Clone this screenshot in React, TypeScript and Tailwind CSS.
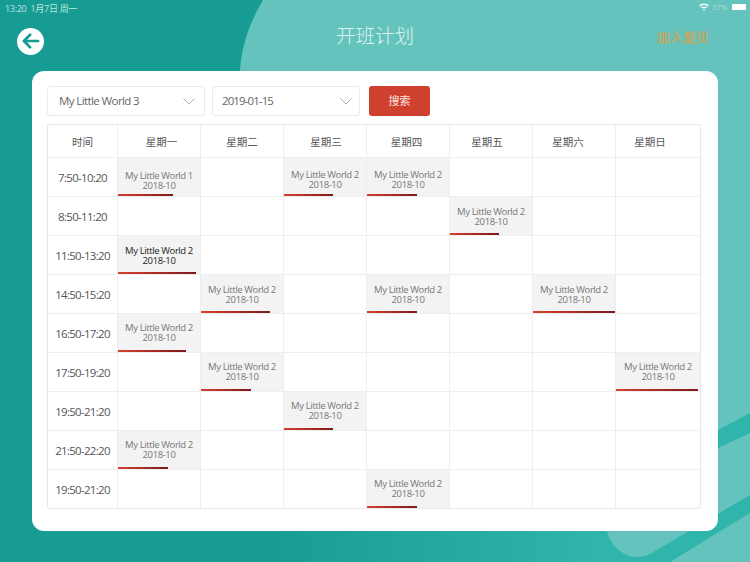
import React from "react";

const slots: [string, Record<number, [number, boolean?]>][] = [
  ["7:50-10:20", { 0: [55], 2: [49], 3: [50] }],
  ["8:50-11:20", { 4: [49] }],
  ["11:50-13:20", { 0: [78, true] }],
  ["14:50-15:20", { 1: [69], 3: [50], 5: [82] }],
  ["16:50-17:20", { 0: [68] }],
  ["17:50-19:20", { 1: [50], 6: [82] }],
  ["19:50-21:20", { 2: [49] }],
  ["21:50-22:20", { 0: [50] }],
  ["19:50-21:20", { 3: [50] }],
];
const days = ["星期一", "星期二", "星期三", "星期四", "星期五", "星期六", "星期日"];
const dayPad = ["pl-[5px]", "", "pl-[2px]", "pr-[3px]", "pr-[8px]", "pr-[12px]", "pr-[16px]"];
const rowPad = ["pt-[12px]", "pt-[10px]", "pt-[10px]", "pt-[10px]", "pt-[9px]", "pt-[9px]", "pt-[9px]", "pt-[9px]", "pt-[9px]"];

const font = { fontFamily: '"Open Sans","Noto Sans CJK SC",sans-serif' };

function Chevron() {
  return (
    <svg width="12" height="7" viewBox="0 0 12 7" fill="none" stroke="#a8aeae" strokeWidth="1">
      <path d="M.5.5L6 6 11.5.5" />
    </svg>
  );
}

export default function App() {
  return (
    <div className="relative w-[750px] h-[562px] overflow-hidden bg-[#169c92]" style={font}>
      <svg className="absolute inset-0" width="750" height="562" viewBox="0 0 750 562">
        <defs>
          <linearGradient id="bg" x1="0" y1="0" x2="1" y2="0">
            <stop offset="0.35" stopColor="#169c92" />
            <stop offset="0.8" stopColor="#2fb5ab" />
          </linearGradient>
        </defs>
        <rect width="750" height="562" fill="url(#bg)" />
        <path d="M263 0C248 25 241 50 240 71L240 300L606 525V562H750V0Z" fill="#65c3bd" />
        <path d="M718 430L750 413V433L718 448Z" fill="#2fb5ab" />
        <path d="M606 525C608 548 630 564 650 554L750 495V513L670 562H606Z" fill="#2fb5ab" />
      </svg>

      <div className="relative flex flex-col h-full">
        <div className="flex justify-between items-center h-[18px] pl-[5px] pr-[4px] text-[9px] tracking-[-0.3px] text-[#bfe6e2]">
          <span>13:20&nbsp;&nbsp;1月7日 周一</span>
          <span className="flex items-center gap-[3px] text-[8px] -mt-[5px]">
            <svg width="10" height="8" viewBox="0 0 10 8" fill="white">
              <path d="M0 2.6C2.8-.2 7.2-.2 10 2.6L9 3.6C6.7 1.4 3.3 1.4 1 3.6ZM2 4.6C3.7 3 6.3 3 8 4.6L7 5.6C5.9 4.6 4.1 4.6 3 5.6ZM5 8L3.9 6.7C4.5 6.2 5.5 6.2 6.1 6.7Z" />
            </svg>
            <span className="text-[#a9dcd8] mr-[2px]">37%</span>
            <span className="block shrink-0 w-[14px] h-[6px] bg-white rounded-[1px]" />
          </span>
        </div>

        <div className="flex items-center justify-between h-[53px] pl-[17px] pr-[41px]">
          <div className="w-[27px] h-[27px] rounded-full bg-white flex items-center justify-center -mt-[7px]">
            <svg width="18" height="16" viewBox="0 0 20 18" fill="none" stroke="#169c92" strokeWidth="3" strokeLinecap="round" strokeLinejoin="round">
              <path d="M9 2L2 9l7 7M2.5 9H18" />
            </svg>
          </div>
          <div className="absolute left-0 right-0 top-[22px] text-center text-[19.5px] leading-[28px] font-light text-[#dff3f1]">开班计划</div>
          <div className="text-[13px] font-bold text-[#c2a765] -mt-[14px]">加入爱贝</div>
        </div>

        <div className="ml-[32px] w-[686px] h-[460px] rounded-[12px] bg-white p-[15px]">
          <div className="flex gap-[7px] h-[30px] text-[11.5px] text-[#666]">
            <div className="w-[158px] flex items-center justify-between pl-[11px] pr-[9px] border border-[#eaeaea] rounded-[3px] tracking-[-0.6px]">
              My Little World 3 <Chevron />
            </div>
            <div className="w-[148px] flex items-center justify-between pl-[9px] pr-[7px] border border-[#eaeaea] rounded-[3px] tracking-[-0.9px]">
              2019-01-15 <Chevron />
            </div>
            <div className="w-[61px] ml-[2px] flex items-center justify-center rounded-[3px] bg-[#d0402e] text-[11px] text-[#f8e4e0]">搜索</div>
          </div>

          <div className="mt-[8px] w-[654px] border border-[#e9e9e9] rounded-[2px] grid grid-cols-[69px_repeat(6,83px)_1fr] grid-rows-[33px_repeat(8,39px)_38px] text-[#555]">
            <div className="flex items-center justify-center text-[10.5px] pt-[3px] border-b border-[#eeeeee]">时间</div>
            {days.map((d, i) => (
              <div key={d} className={`flex items-center justify-center text-[10.5px] pt-[3px] border-l border-b border-[#eeeeee] ${dayPad[i]}`}>{d}</div>
            ))}
            {slots.map(([t, cells], r) => (
              <React.Fragment key={r}>
                <div className={`flex items-center justify-center text-[11.5px] tracking-[-0.7px] pt-[2px] ${r < 8 ? "border-b" : ""} border-[#eeeeee]`}>{t}</div>
                {days.map((_, c) => {
                  const cell = cells[c];
                  const first = r === 0 && c === 0;
                  return (
                    <div key={c} className={`relative border-l ${r < 8 ? "border-b" : ""} border-[#eeeeee] ${cell ? "bg-[#f3f3f3]" : ""}`}>
                      {cell && (
                        <>
                          <div className={`text-center text-[9.5px] tracking-[-0.4px] leading-[10px] ${first ? "pt-[13px]" : rowPad[r]} ${cell[1] ? "text-[#222]" : "text-[#777]"}`}>
                            My Little World {first ? "1" : "2"}<br />2018-10
                          </div>
                          <div
                            className="absolute left-0 bottom-0 h-[2px] bg-gradient-to-r from-[#d8402f] to-[#7d1a1c]"
                            style={{ width: cell[0] }}
                          />
                        </>
                      )}
                    </div>
                  );
                })}
              </React.Fragment>
            ))}
          </div>
        </div>
      </div>
    </div>
  );
}
